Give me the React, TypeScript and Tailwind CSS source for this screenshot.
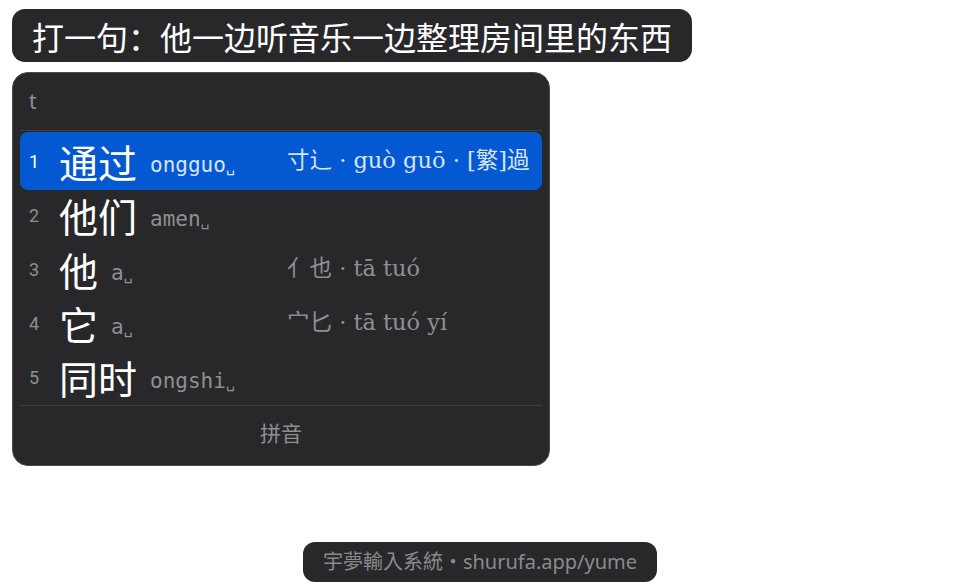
import React from "react";

const cjk = '"Noto Sans CJK SC", "Noto Sans", sans-serif';
const serif = '"DejaVu Serif", "Noto Sans CJK SC", serif';
const mono = '"DejaVu Sans Mono", "Noto Sans CJK SC", monospace';

type Cand = { n: number; word: string; code: string; note?: string };

const cands: Cand[] = [
  { n: 1, word: "通过", code: "ongguo", note: "寸辶 · guò guō · [繁]過" },
  { n: 2, word: "他们", code: "amen" },
  { n: 3, word: "他", code: "a", note: "亻也 · tā tuó" },
  { n: 4, word: "它", code: "a", note: "宀匕 · tā tuó yí" },
  { n: 5, word: "同时", code: "ongshi" },
];

function Row({ c, active }: { c: Cand; active: boolean }) {
  return (
    <div className="relative flex h-[54px] items-center">
      {active && (
        <div className="absolute inset-x-0 -bottom-[2px] -top-[2px] rounded-[8px] bg-[#0459d2]" />
      )}
      <div className="relative flex w-[267px] shrink-0 items-center">
        <span
          className={
            "w-[39px] pl-[9px] text-[18px] " +
            (active ? "text-white" : "text-[#8f8f92]")
          }
          style={{ fontFamily: '"Roboto", sans-serif' }}
        >
          {c.n}
        </span>
        <span
          className="text-[39px] leading-none text-white"
          style={{ fontFamily: cjk }}
        >
          {c.word}
        </span>
        <span
          className={
            "ml-[13px] mt-[10px] text-[21px] " +
            (active ? "text-[#d6e4fb]" : "text-[#8f8f92]")
          }
          style={{ fontFamily: mono }}
        >
          {c.code}
          <span className="text-[15px]">␣</span>
        </span>
      </div>
      {c.note && (
        <span
          className={
            "relative text-[22.5px] " +
            (active ? "text-[#d6e4fb]" : "text-[#8f8f92]")
          }
          style={{ fontFamily: serif }}
        >
          {c.note}
        </span>
      )}
    </div>
  );
}

export default function App() {
  return (
    <div className="relative h-[584px] w-[960px] overflow-hidden bg-white">
      <div className="flex flex-col items-start pl-[12px] pt-[9px]">
        <div
          className="flex h-[53px] items-center rounded-[13px] bg-[#28282a] px-[20px] text-[32px] tracking-normal text-white"
          style={{ fontFamily: cjk }}
        >
          打一句：他一边听音乐一边整理房间里的东西
        </div>
        <div className="mt-[10px] flex h-[394px] w-[538px] flex-col rounded-[16px] border-[1.5px] border-[#4a4a4d] bg-[#28282a] px-[7px]">
          <div
            className="flex h-[57px] items-center pl-[9px] text-[21px] text-[#8f8f92]"
            style={{ fontFamily: '"Noto Sans", sans-serif' }}
          >
            t
          </div>
          <div className="h-px bg-[#3e3e41]" />
          <div className="mb-[1px] mt-[3px] flex flex-col">
            {cands.map((c, i) => (
              <Row key={c.n} c={c} active={i === 0} />
            ))}
          </div>
          <div className="h-px bg-[#3e3e41]" />
          <div
            className="flex flex-1 items-center justify-center pb-[5px] text-[21px] text-[#8f8f92]"
            style={{ fontFamily: cjk }}
          >
            拼音
          </div>
        </div>
      </div>
      <div className="absolute bottom-[2px] left-0 right-0 flex justify-center">
        <div
          className="flex h-[40px] items-center rounded-[12px] bg-[#28282a] px-[20px] text-[20px] text-[#8a8a8d]"
          style={{ fontFamily: '"Noto Sans", "Noto Sans CJK TC", sans-serif' }}
        >
          宇夢輸入系統・shurufa.app/yume
        </div>
      </div>
    </div>
  );
}
